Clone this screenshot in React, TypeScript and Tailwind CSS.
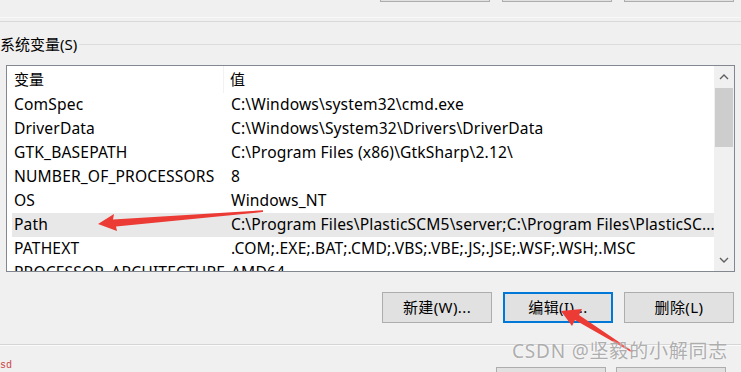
const font = { fontFamily: '"Noto Sans", "Noto Sans CJK SC", sans-serif' };

const rows: [string, string][] = [
  ["ComSpec", "C:\\Windows\\system32\\cmd.exe"],
  ["DriverData", "C:\\Windows\\System32\\Drivers\\DriverData"],
  ["GTK_BASEPATH", "C:\\Program Files (x86)\\GtkSharp\\2.12\\"],
  ["NUMBER_OF_PROCESSORS", "8"],
  ["OS", "Windows_NT"],
  ["Path", "C:\\Program Files\\PlasticSCM5\\server;C:\\Program Files\\PlasticSC..."],
  ["PATHEXT", ".COM;.EXE;.BAT;.CMD;.VBS;.VBE;.JS;.JSE;.WSF;.WSH;.MSC"],
  ["PROCESSOR_ARCHITECTURE", "AMD64"],
];

function Btn({ label, primary }: { label: string; primary?: boolean }) {
  return (
    <div
      className={
        "w-[110px] h-[31px] shrink-0 flex items-center justify-center bg-[#e1e1e1] text-[15px] tracking-[0.4px] text-black " +
        (primary ? "border-2 border-[#0078d7]" : "border border-[#adadad]")
      }
    >
      {label}
    </div>
  );
}

function Chevron({ down }: { down?: boolean }) {
  return (
    <svg width="10" height="6" viewBox="0 0 10 6" className={down ? "rotate-180" : ""}>
      <path d="M1 5 L5 1 L9 5" fill="none" stroke="#606060" strokeWidth="1.4" />
    </svg>
  );
}

export default function App() {
  return (
    <div className="relative w-[741px] h-[372px] overflow-hidden bg-[#f0f0f0] text-black" style={font}>
      {/* top buttons, mostly scrolled off */}
      <div className="h-[2px] overflow-hidden flex items-end justify-end gap-[12px] pr-[7px]">
        <div className="w-[110px] h-[30px] shrink-0 bg-[#e1e1e1] border border-[#adadad]" />
        <div className="w-[110px] h-[30px] shrink-0 bg-[#e1e1e1] border border-[#adadad]" />
        <div className="w-[110px] h-[30px] shrink-0 bg-[#e1e1e1] border border-[#adadad]" />
      </div>

      {/* bottom of user group */}
      <div className="mt-[15px] h-px bg-[#f8f8f8]" />
      <div className="mt-[3px] h-px bg-[#d9d9d9]" />

      {/* system variables group */}
      <div className="mt-[12px] flex items-center h-[20px]">
        <span className="text-[15px] leading-[20px] whitespace-nowrap">系统变量(S)</span>
        <div className="flex-1 h-px bg-[#dcdcdc] ml-[2px]" />
      </div>

      <div className="mt-[11px] ml-[6px] w-[729px] h-[207px] border border-[#828790] bg-white flex overflow-hidden">
        <div className="flex-1 pl-[5px] overflow-hidden">
          <div className="flex h-[27px] items-center text-[15px]">
            <div className="w-[212px] pl-[2px] h-full flex items-center border-r border-[#f2f2f2]">变量</div>
            <div className="pl-[6px]">值</div>
          </div>
          {rows.map(([k, v]) => (
            <div
              key={k}
              className={
                "flex h-[24px] items-center text-[15.6px] tracking-[0.15px] whitespace-nowrap " +
                (k === "Path" ? "bg-[#e8e8e8]" : "")
              }
            >
              <div className="w-[212px] pl-[2px] shrink-0">{k}</div>
              <div className="pl-[7px] overflow-hidden">{v}</div>
            </div>
          ))}
        </div>
        <div className="w-[20px] shrink-0 bg-[#f0f0f0] flex flex-col">
          <div className="h-[22px] flex items-center justify-center">
            <Chevron />
          </div>
          <div className="h-[59px] mx-px bg-[#cdcdcd]" />
          <div className="flex-1" />
          <div className="h-[22px] flex items-center justify-center">
            <Chevron down />
          </div>
        </div>
      </div>

      <div className="mt-[20px] flex justify-end gap-[11px] pr-[7px]">
        <Btn label="新建(W)..." />
        <Btn label="编辑(I)..." primary />
        <Btn label="删除(L)" />
      </div>

      <div className="mt-[21px] h-px bg-[#d5d5d5]" />
      <div className="h-px bg-[#fafafa]" />

      <div className="flex items-start justify-between pr-[15px]">
        <span className="mt-[15px] text-[10px] leading-[10px] text-[#c44] font-mono">sd</span>
        <div className="mt-[21px] flex gap-[10px]">
          <div className="w-[110px] h-[30px] bg-[#e1e1e1] border border-[#adadad]" />
          <div className="w-[110px] h-[30px] bg-[#e1e1e1] border border-[#adadad]" />
        </div>
      </div>

      {/* annotation arrows */}
      <svg className="absolute inset-0 pointer-events-none" width="741" height="372">
        <polygon
          points="98,224 114,214 113,219.5 263,210.3 263,212 116,226.5 117,231"
          fill="#ec3a35"
        />
        <polygon
          points="561,311 582,309 579,315 633,351.5 632,352.5 575,320 572,326"
          fill="#ec3a35"
        />
      </svg>

      {/* watermark */}
      <div
        className="absolute left-[512px] top-[339px] text-[19px] leading-[24px] tracking-[0.8px] text-[#a0a0a0]/85 whitespace-nowrap"
        style={{ textShadow: "0 0 2px #fff" }}
      >
        CSDN @坚毅的小解同志
      </div>
    </div>
  );
}
